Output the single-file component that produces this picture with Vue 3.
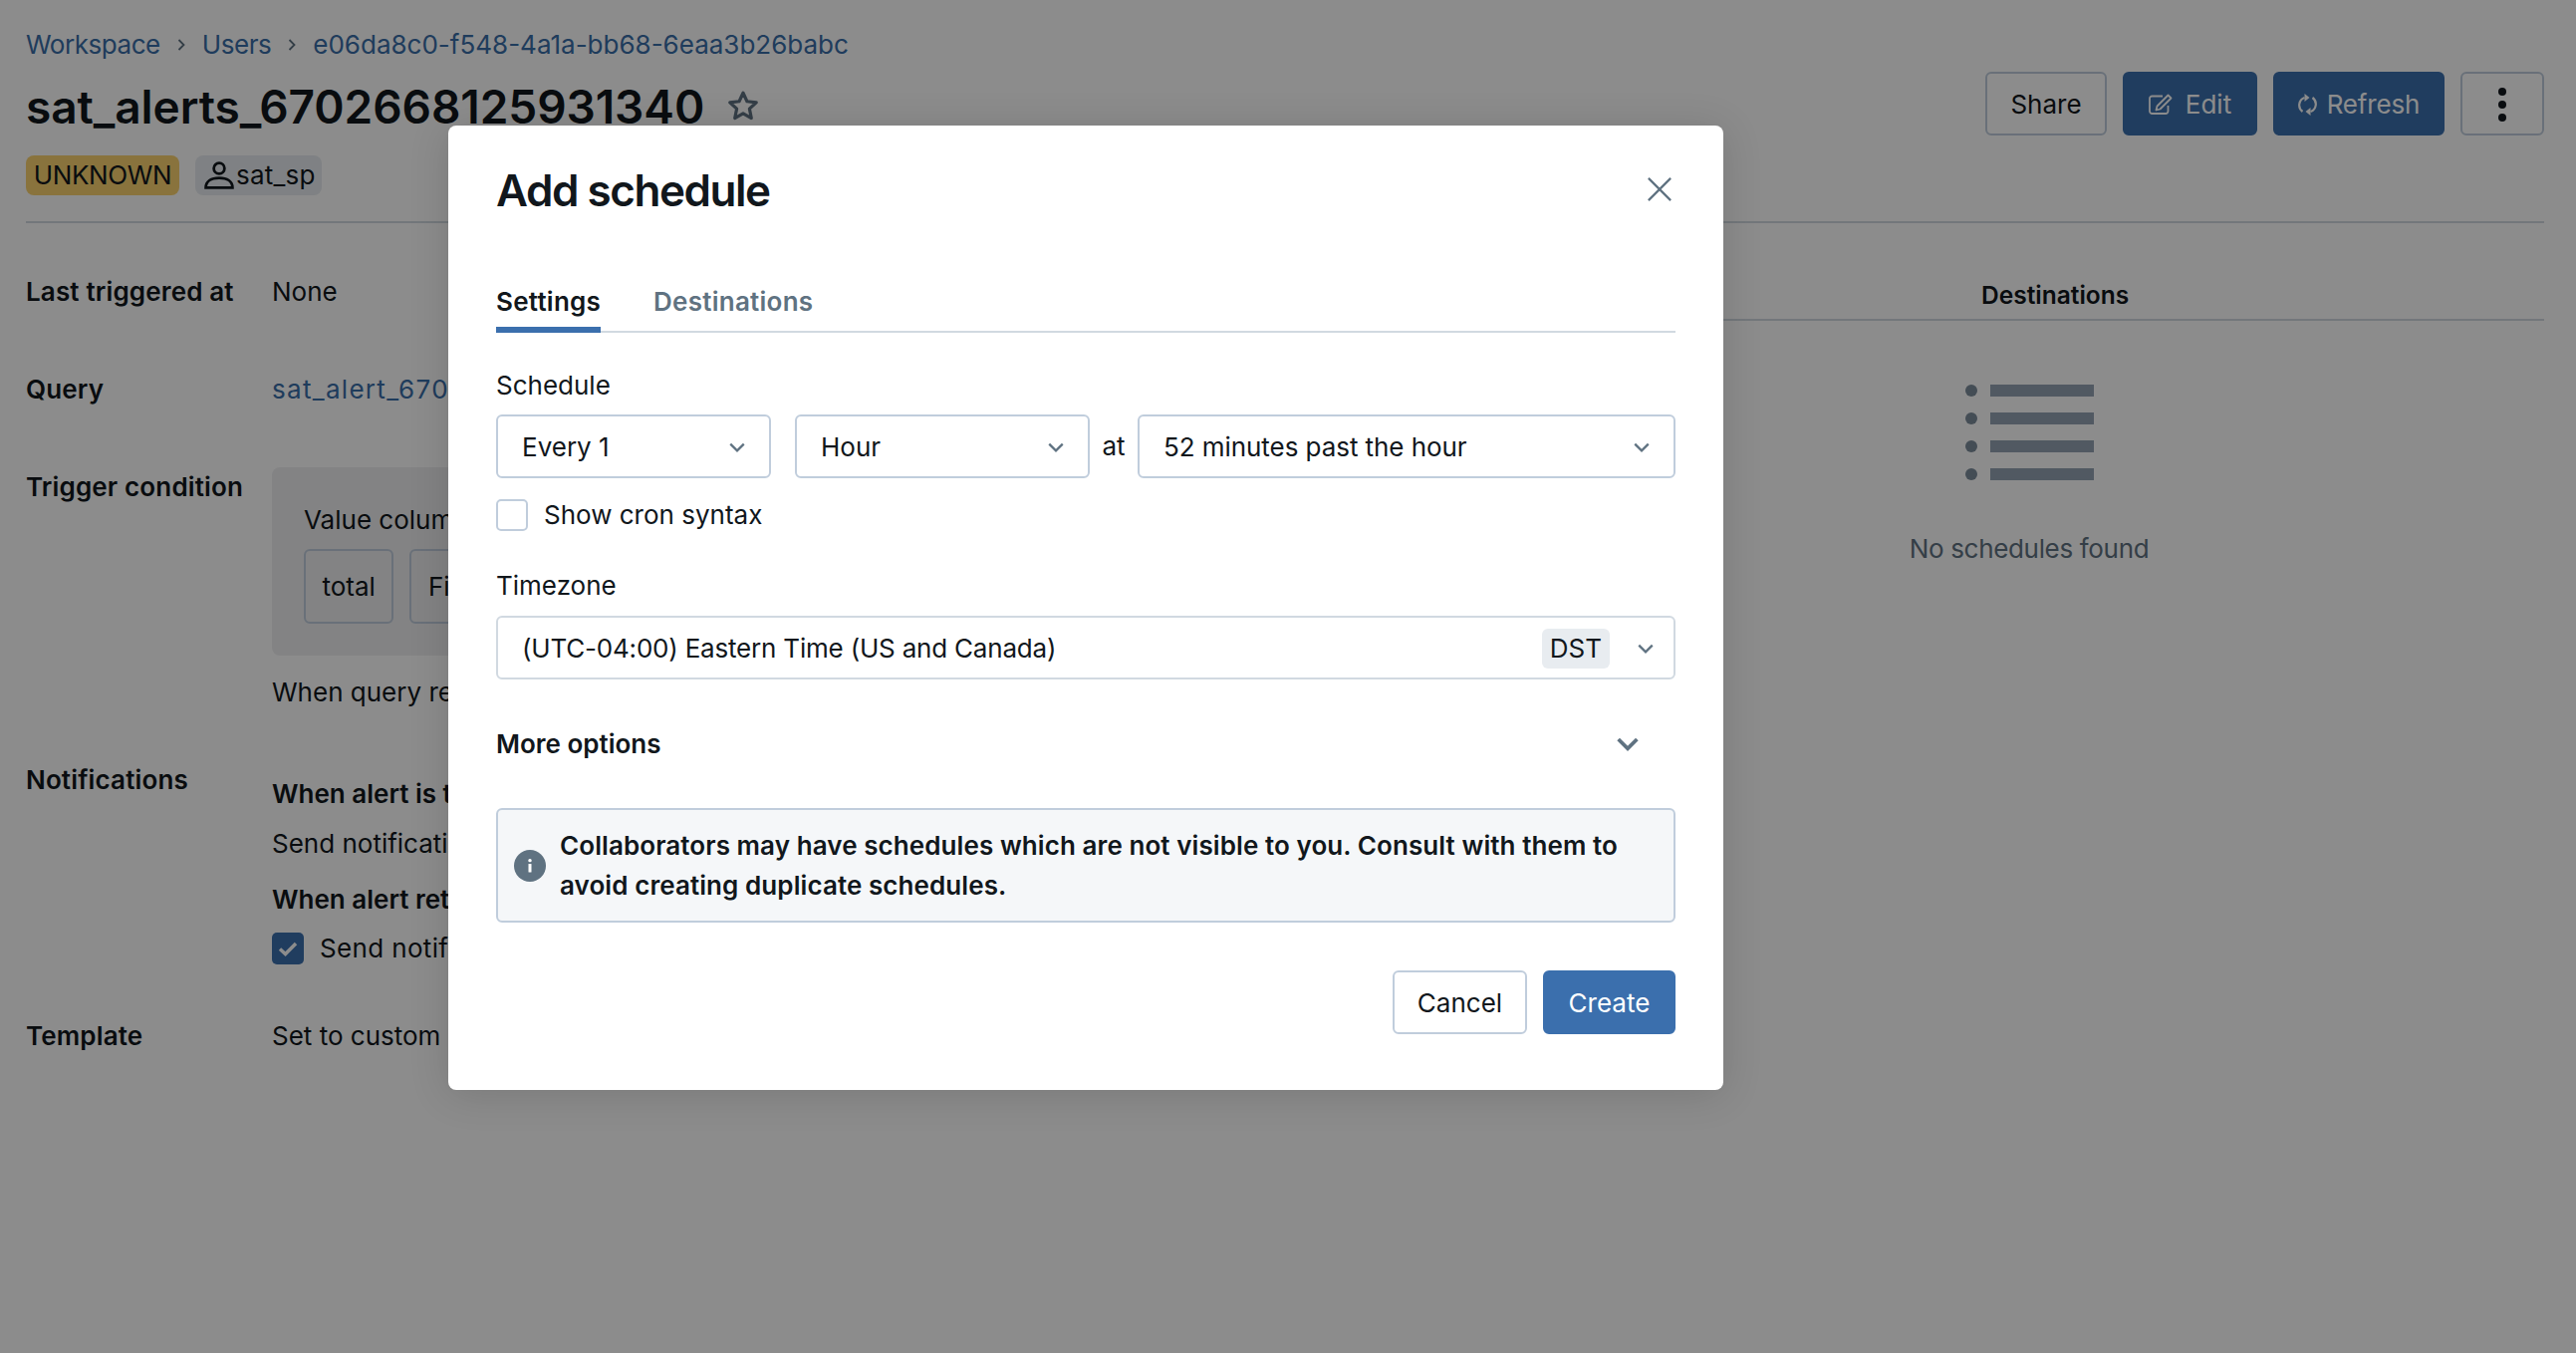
<script setup>
const crumbs = ['Workspace', 'Users', 'e06da8c0-f548-4a1a-bb68-6eaa3b26babc']
const rows = [0, 1, 2, 3]
</script>

<template>
  <div class="page">
    <nav class="crumbs">
      <template v-for="(c, i) in crumbs" :key="c">
        <svg v-if="i" class="sep" viewBox="0 0 10 16"><path d="M2.500 3l5 5-5 5" /></svg>
        <a :class="{ tight: i < 2 }">{{ c }}</a>
      </template>
    </nav>

    <header class="head">
      <div class="title">
        <h1>sat_alerts_6702668125931340</h1>
        <svg class="star" viewBox="0 0 32 32"><path d="M16 4l3.700 8 8.800 1-6.500 6 1.800 8.800-7.800-4.500-7.800 4.500 1.800-8.800-6.500-6 8.800-1z" /></svg>
      </div>
      <div class="actions">
        <button class="btn share">Share</button>
        <button class="btn primary edit">
          <svg class="ic-edit" viewBox="0 0 26 22"><path d="M19.500 13v5.500a2.500 2.500 0 0 1-2.500 2.500H3.500A2.500 2.500 0 0 1 1 18.500V6a2.500 2.500 0 0 1 2.500-2.500H14" /><path d="M8.500 13.500L19.500 2.500l3 3L11.500 16.500l-4 1z" /></svg>
          Edit
        </button>
        <button class="btn primary refresh">
          <svg class="ic-ref" viewBox="0 0 19 22"><path d="M4.500 18A8 8 0 0 1 6.500 4" /><path d="M14.500 4A8 8 0 0 1 12.500 18" /><path class="fill" d="M6.500 0v8l5-4zM12.500 14v8l-5-4z" /></svg>
          Refresh
        </button>
        <button class="btn more" aria-label="More"><i></i><i></i><i></i></button>
      </div>
    </header>

    <div class="tags">
      <span class="tag unknown">UNKNOWN</span>
      <span class="tag owner">
        <svg viewBox="0 0 28 28"><circle cx="14" cy="7.500" r="5" /><path d="M1.500 25.500c0-6 5-9 12.500-9s12.500 3 12.500 9z" /></svg>
        sat_sp
      </span>
    </div>

    <div class="body">
      <section class="info">
        <div class="row">
          <div class="label">Last triggered at</div>
          <div class="value">None</div>
        </div>
        <div class="row r2">
          <div class="label">Query</div>
          <div class="value"><a class="qlink">sat_alert_670</a></div>
        </div>
        <div class="row r3">
          <div class="label trig">Trigger condition</div>
          <div class="value">
            <div class="panel">
              <div>Value column</div>
              <div class="chips">
                <span class="chip">total</span>
                <span class="chip">First</span>
              </div>
            </div>
            <div class="when">When query result</div>
          </div>
        </div>
        <div class="row notes">
          <div class="label">Notifications</div>
          <div class="value">
            <div class="strong n1">When alert is triggered</div>
            <div class="n2">Send notification</div>
            <div class="strong n3">When alert returns</div>
            <div class="n4">
              <span class="check"><svg viewBox="0 0 32 32"><path d="M8 16.500l5.500 5L24 11" /></svg></span>
              Send notification
            </div>
          </div>
        </div>
        <div class="row tmpl">
          <div class="label">Template</div>
          <div class="value">Set to custom</div>
        </div>
      </section>

      <section class="sched">
        <div class="sched-head"><span>Destinations</span></div>
        <div class="empty">
          <div class="list-icon">
            <div v-for="r in rows" :key="r" class="list-row"><i></i><b></b></div>
          </div>
          <p>No schedules found</p>
        </div>
      </section>
    </div>

    <div class="overlay">
      <div class="modal">
        <div class="m-head">
          <h2>Add schedule</h2>
          <svg class="close" viewBox="0 0 28 28"><path d="M2 2l24 24M26 2L2 26" /></svg>
        </div>

        <div class="tabs">
          <span class="tab active">Settings</span>
          <span class="tab">Destinations</span>
        </div>

        <label class="f-label first">Schedule</label>
        <div class="sel-row">
          <div class="select s1"><span>Every 1</span><svg class="chev" viewBox="0 0 16 16"><path d="M2 5l6 6 6-6" /></svg></div>
          <div class="select s2"><span>Hour</span><svg class="chev" viewBox="0 0 16 16"><path d="M2 5l6 6 6-6" /></svg></div>
          <span class="at">at</span>
          <div class="select s3"><span>52 minutes past the hour</span><svg class="chev" viewBox="0 0 16 16"><path d="M2 5l6 6 6-6" /></svg></div>
        </div>

        <div class="cron"><span class="box"></span>Show cron syntax</div>

        <label class="f-label tz-label">Timezone</label>
        <div class="select tz">
          <span class="tz-text">(UTC-04:00) Eastern Time (US and Canada)</span>
          <span class="dst">DST</span>
          <svg class="chev" viewBox="0 0 16 16"><path d="M2 5l6 6 6-6" /></svg>
        </div>

        <div class="more-opts">
          <span>More options</span>
          <svg viewBox="0 0 28 20"><path d="M3 3.500l11 11 11-11" /></svg>
        </div>

        <div class="alert">
          <span class="info-ic"><svg viewBox="0 0 32 32"><rect x="14.300" y="9" width="3.400" height="3.200" rx="1.500" /><rect x="14.500" y="14" width="3" height="8.500" rx=".6" /></svg></span>
          <p>Collaborators may have schedules which are not visible to you. Consult with them to avoid creating duplicate schedules.</p>
        </div>

        <div class="m-foot">
          <button class="btn cancel">Cancel</button>
          <button class="btn primary create">Create</button>
        </div>
      </div>
    </div>
  </div>
</template>

<style>
html, body { margin: 0; overflow: hidden; background: #fff; }
</style>

<style scoped>
.page {
  position: relative;
  width: 2586px;
  height: 1358px;
  box-sizing: border-box;
  padding: 27px 32px 0 26px;
  overflow: hidden;
  font: 400 26px/36px Inter, "Liberation Sans", sans-serif;
  color: #11171c;
  background: #fff;
}
a { color: #3a6ea8; }
.crumbs { display: flex; align-items: center; height: 36px; gap: 12px; }
.tight { letter-spacing: -.45px; }
.sep { width: 10px; height: 16px; fill: none; stroke: #5f7281; stroke-width: 1.800; margin: 0 4px; }
.head { display: flex; justify-content: space-between; align-items: flex-start; margin-top: 9px; height: 64px; }
.title { display: flex; align-items: center; height: 70px; gap: 22px; }
h1 { margin: 0; font-size: 46px; line-height: 70px; font-weight: 600; letter-spacing: -.06px; }
.star { width: 34px; height: 34px; margin-top: -2px; fill: none; stroke: #5f7281; stroke-width: 3; stroke-linejoin: round; }
.actions { display: flex; gap: 16px; }
.btn {
  box-sizing: border-box;
  height: 64px;
  display: inline-flex;
  align-items: center;
  justify-content: center;
  border-radius: 6px;
  border: 2px solid #c0cddc;
  background: #fff;
  color: #11171c;
  font: inherit;
  padding: 1px 0 0;
}
.primary { background: #3b6fad; border-color: #3b6fad; color: #fff; }
.ic-edit { width: 26px; height: 22px; margin: -2px 11px 0 0; fill: none; stroke: #fff; stroke-width: 1.800; stroke-linejoin: round; }
.ic-ref { width: 19px; height: 22px; margin-right: 10px; fill: none; stroke: #fff; stroke-width: 2.200; }
.ic-ref .fill { fill: #fff; stroke: none; }
.share { width: 122px; }
.edit { width: 135px; }
.refresh { width: 172px; letter-spacing: -.15px; }
.more { width: 84px; flex-direction: column; gap: 5px; }
.more i { width: 8px; height: 8px; border-radius: 50%; background: #11171c; }
.tags { display: flex; gap: 16px; margin-top: 20px; height: 40px; }
.tag { display: inline-flex; align-items: center; height: 40px; border-radius: 8px; line-height: 40px; }
.unknown { width: 154px; justify-content: center; background: #f9d26f; color: #11171c; letter-spacing: -.4px; }
.owner { width: 127px; box-sizing: border-box; padding-left: 9px; background: #e8ecf0; color: #11171c; letter-spacing: .2px; }
.owner svg { width: 30px; height: 30px; fill: none; stroke: #11171c; stroke-width: 2.600; margin-right: 2px; }
.body { display: flex; margin-top: 26px; border-top: 2px solid #d1d9e1; }
.info { width: 1200px; padding-top: 51px; flex: none; }
.row { display: flex; margin-bottom: 62px; }
.r2 { margin-bottom: 60px; }
.r3 { margin-bottom: 52px; }
.label { width: 247px; flex: none; font-weight: 600; letter-spacing: .15px; }
.trig { padding-top: 2px; }
.value { flex: 1; min-width: 0; white-space: nowrap; }
.qlink { letter-spacing: 1.300px; }
.panel { background: #eeeff1; border-radius: 8px; padding: 35px 32px 32px; }
.chips { display: flex; gap: 16px; margin-top: 11px; }
.chip { box-sizing: border-box; height: 75px; line-height: 71px; padding: 0 16.500px; border: 2px solid #c0cddc; border-radius: 6px; }
.when { margin-top: 19px; }
.notes { margin-bottom: 52px; }
.n1 { padding-top: 14px; }
.n2 { margin-top: 14px; }
.n3 { margin-top: 20px; }
.n4 { display: flex; align-items: center; margin-top: 13px; gap: 16px; letter-spacing: .35px; }
.strong { font-weight: 600; }
.check { width: 32px; height: 32px; border-radius: 5px; background: #3b6fad; display: block; }
.check svg { display: block; width: 32px; height: 32px; fill: none; stroke: #fff; stroke-width: 3.500; }
.sched { flex: 1; margin-left: 294px; }
.sched-head { height: 98px; box-sizing: border-box; padding: 54px 0 0 469px; border-bottom: 2px solid #d1d9e1; font-weight: 600; font-size: 24.500px; line-height: 36px; }
.empty { display: flex; flex-direction: column; align-items: center; padding-top: 64px; }
.list-icon { display: flex; flex-direction: column; gap: 16px; }
.list-row { display: flex; align-items: center; gap: 13px; height: 12px; }
.list-row i { width: 12px; height: 12px; border-radius: 50%; background: #7c8c9b; }
.list-row b { width: 104px; height: 12px; background: #94a3b3; }
.empty p { margin: 51px 0 0; color: #5f7281; letter-spacing: -.33px; }

.overlay {
  position: absolute;
  inset: 0;
  background: rgba(0, 0, 0, .45);
  padding: 126px 0 0 450px;
}
.modal {
  width: 1280px;
  height: 968px;
  box-sizing: border-box;
  padding: 0 48px;
  background: #fff;
  border-radius: 8px;
  box-shadow: 0 4px 40px rgba(0, 0, 0, .14);
}
.m-head { display: flex; justify-content: space-between; align-items: center; height: 128px; }
h2 { margin: 2px 0 0; font-size: 44px; line-height: 64px; font-weight: 600; letter-spacing: -1.450px; }
.close { width: 26px; height: 26px; margin-right: 3px; fill: none; stroke: #5f7281; stroke-width: 2.400; }
.tabs { display: flex; gap: 53px; height: 80px; box-sizing: border-box; border-bottom: 2px solid #d1d9e1; }
.tab { height: 80px; box-sizing: border-box; padding-top: 31px; font-weight: 600; color: #5f7281; letter-spacing: .25px; }
.tab.active { color: #11171c; border-bottom: 6px solid #3b6fad; }
.f-label { display: block; }
.first { margin-top: 35px; }
.tz-label { margin-top: 35px; }
.sel-row { display: flex; align-items: center; margin-top: 11px; }
.select {
  box-sizing: border-box;
  height: 64px;
  display: flex;
  align-items: center;
  justify-content: space-between;
  padding: 1px 23px 0 24px;
  border: 2px solid #c0cddc;
  border-radius: 6px;
  background: #fff;
}
.chev { width: 18px; height: 18px; flex: none; fill: none; stroke: #5f7281; stroke-width: 2; }
.s1 { width: 276px; margin-right: 24px; }
.s2 { width: 296px; }
.at { width: 48px; text-align: center; }
.s3 { flex: 1; letter-spacing: -.06px; }
.cron { display: flex; align-items: center; gap: 16px; height: 36px; margin-top: 19px; }
.box { width: 32px; height: 32px; box-sizing: border-box; border: 2px solid #c0cddc; border-radius: 5px; }
.tz { margin-top: 12px; border-color: #d1d9e1; padding-right: 19px; }
.tz-text { flex: 1; letter-spacing: -.2px; }
.dst { height: 40px; line-height: 40px; padding: 0 8px; background: #e8ecf0; border-radius: 6px; margin-right: 27px; }
.more-opts { display: flex; justify-content: space-between; align-items: center; height: 36px; margin-top: 47px; font-weight: 600; }
.more-opts svg { width: 24px; height: 17px; margin-right: 36px; fill: none; stroke: #5f7281; stroke-width: 4.400; }
.alert {
  box-sizing: border-box;
  height: 115px;
  margin-top: 46px;
  display: flex;
  align-items: center;
  gap: 14px;
  padding: 0 32px 0 16px;
  background: #f5f7f9;
  border: 2px solid #c0cddc;
  border-radius: 6px;
}
.alert p { margin: 0; font-weight: 600; line-height: 40px; letter-spacing: .08px; }
.info-ic { width: 32px; height: 32px; flex: none; border-radius: 50%; background: #5f7281; }
.info-ic svg { display: block; width: 32px; height: 32px; fill: #fff; }
.m-foot { display: flex; justify-content: flex-end; gap: 16px; margin-top: 48px; }
.cancel { width: 135px; }
.create { width: 133px; }
</style>
